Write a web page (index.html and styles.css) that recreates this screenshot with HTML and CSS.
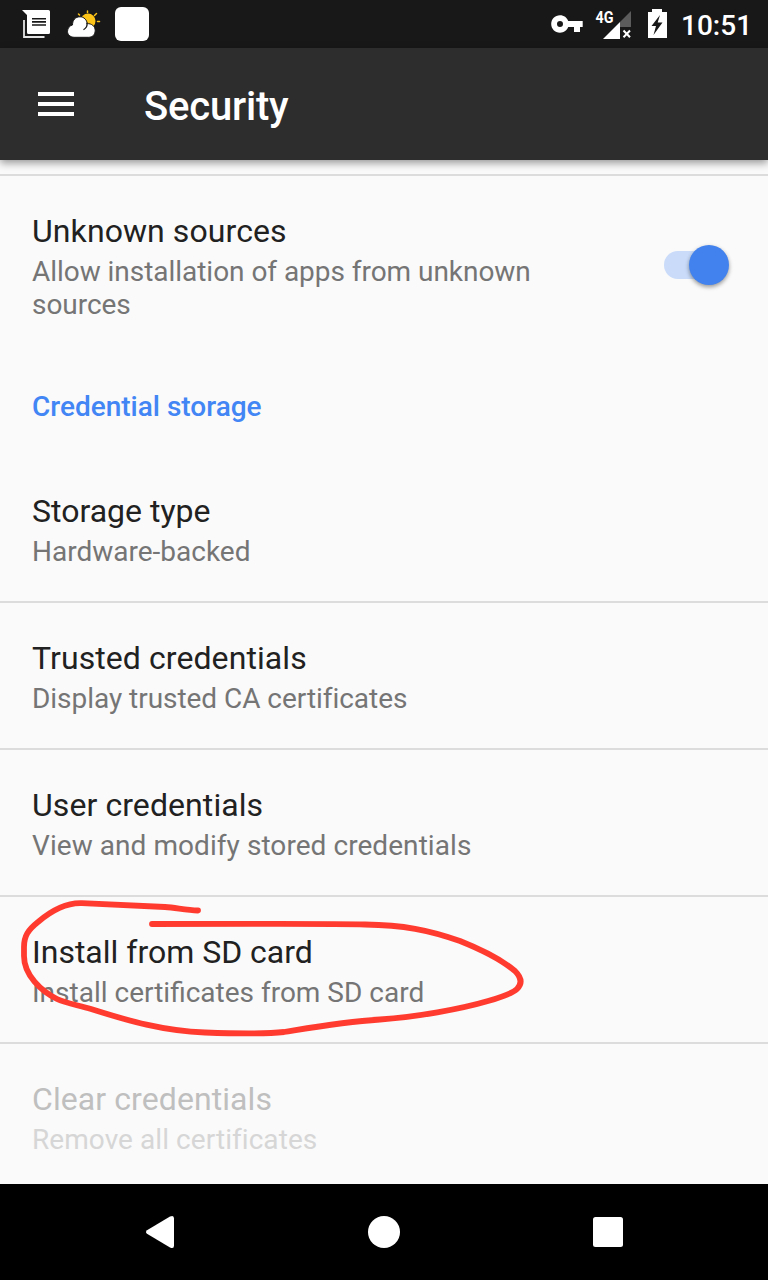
FILE: index.html
```html
<!DOCTYPE html>
<html lang="en">
<head>
<meta charset="utf-8">
<title>Security</title>
<link rel="stylesheet" href="styles.css">
</head>
<body>
<div class="screen">
  <div class="status">
    <svg class="status-left" width="160" height="48" viewBox="0 0 160 48">
      <path fill="#fff" d="M22 10H48.500Q50 10 50 11.500V32.500Q50 34 48.500 34H28.500Q27 34 27 32.500V15Z"/>
      <path fill="none" stroke="#e4e4e4" stroke-width="1.800" d="M24 20V37H44.500"/>
      <path stroke="#181818" stroke-width="1.600" d="M32 18.800H46M32 21.900H46M32 25H46"/>
      <g stroke="#fcc419" stroke-width="1.500" stroke-linecap="round"><path d="M87.500 11V12.500M96.500 13.500L94.500 15.500M97.500 21.500H99.500M78.500 14L79.500 15"/></g>
      <circle cx="88" cy="21" r="7.500" fill="#fcc419"/>
      <path fill="#fff" stroke="#181818" stroke-width="1" d="M74 37.300C70 37 67.500 34.500 67.500 31.300C67.500 28 70 25.500 72.500 25C72.500 20 75.500 16.800 80 16.800C84 16.800 87 20 87.200 23.700C91.500 23.300 95.200 26.200 95.200 30.500C95.200 34.500 92.500 37.300 88.500 37.300Z"/>
      <path fill="none" stroke="#181818" stroke-width="1.300" d="M86.800 22.500Q88 27 83.500 29.700"/>
      <rect x="115" y="7" width="34" height="34" rx="6" fill="#fff"/>
    </svg>
    <div class="status-right">
      <svg width="140" height="48" viewBox="540 0 140 48">
        <path fill="#fff" fill-rule="evenodd" d="M560 15.200C564 15.200 567 17.500 568.200 21H582.700V27H580V32H574V27H568.200C567 30.300 564 32.700 560 32.700C555 32.700 551.200 28.800 551.200 24C551.200 19.100 555 15.200 560 15.200ZM560 21A3 3 0 1 0 560 27A3 3 0 1 0 560 21Z"/>
        <path fill="#5c5c5c" d="M631 11V27H620V22Z"/>
        <path fill="#fff" d="M620 22V39H603Z"/>
        <path stroke="#fff" stroke-width="2" d="M623.500 30.500L630 37.200M630 30.500L623.500 37.200"/>
        <text class="network" x="595.500" y="22.500" textLength="18" lengthAdjust="spacingAndGlyphs">4G</text>
        <path fill="#fff" d="M652 12V9H662V12H667V38H648V12Z"/>
        <path fill="#181818" d="M660 15L651.500 26H656L653.500 35L662.500 22.500H657.700L660 15Z"/>
      </svg>
      <span class="clock">10:51</span>
    </div>
  </div>
  <header class="toolbar">
    <span class="menu"><i></i><i></i><i></i></span>
    <h1>Security</h1>
  </header>
  <main>
    <div class="item source">
      <div class="copy"><h2>Unknown sources</h2><p class="snug">Allow installation of apps from unknown sources</p></div>
      <span class="switch"><span class="knob"></span></span>
    </div>
    <h3>Credential storage</h3>
    <div class="item first"><div class="copy"><h2 class="even">Storage type</h2><p>Hardware-backed</p></div></div>
    <div class="item line"><div class="copy"><h2>Trusted credentials</h2><p class="snug">Display trusted CA certificates</p></div></div>
    <div class="item line"><div class="copy"><h2>User credentials</h2><p class="loose">View and modify stored credentials</p></div></div>
    <div class="item line"><div class="copy"><h2 class="even">Install from SD card</h2><p>Install certificates from SD card</p></div>
      <svg class="scribble" width="520" height="147" viewBox="10 895 520 147">
        <path d="M198 910.500C186 910 177 908 165 907L82 903.200C66 902.500 51 911 38 922C28 930 24 936 24 947V956C24 975 41 991 57 999C65 1003 77 1005 91 1009C129 1021 163 1031 205 1032.500C233 1033.500 262 1034.500 284 1032C315 1027 343 1022 380 1019.500C416 1017 461 1009 488 1001C502 997 513 993 517 989C523 983 521 977 515 971C502 960 480 949 460 941C429 930 403 925 365 924.500C335 923.500 290 924 152 924"/>
      </svg>
    </div>
    <div class="item line disabled"><div class="copy"><h2>Clear credentials</h2><p class="loose">Remove all certificates</p></div></div>
  </main>
  <nav>
    <svg width="768" height="96" viewBox="0 1184 768 96" fill="#fff">
      <path d="M147 1230.200L170 1216.600Q174 1214.500 174 1218.500V1245.500Q174 1249.500 170 1247.400L147 1233.800Q145 1232 147 1230.200Z"/>
      <circle cx="384" cy="1232" r="16"/>
      <rect x="593" y="1217" width="30" height="30" rx="2.500"/>
    </svg>
  </nav>
</div>
</body>
</html>
```
FILE: styles.css
```css
* { box-sizing: border-box; }
body, h1, h2, h3, p { margin: 0; }
body { font-family: Roboto, "Liberation Sans", sans-serif; color: #212121; }
.screen { width: 768px; height: 1280px; display: flex; flex-direction: column; overflow: hidden; background: #fafafa; }
.status { height: 48px; flex: none; display: flex; justify-content: space-between; background: #181818; }
.status-left { display: block; }
.status-right { display: flex; width: 228px; }
.status-right svg { flex: none; }
.network { font: 700 17px Roboto, sans-serif; fill: #fff; }
.clock { color: #fff; font-size: 28px; font-weight: 500; line-height: 51px; white-space: nowrap; padding-left: 1px; }
.toolbar { height: 112px; flex: none; display: flex; align-items: center; gap: 70px; padding-left: 38px; background: #2d2d2d; color: #fff; box-shadow: 0 3px 8px rgba(0,0,0,.4); z-index: 1; }
.menu { width: 36px; display: flex; flex-direction: column; gap: 6px; }
.menu i { height: 4px; background: #fff; }
h1 { font-size: 40px; font-weight: 500; line-height: 48px; padding-top: 6px; letter-spacing: -0.2px; }
main { flex: 1; min-height: 0; overflow: hidden; padding-top: 14px; }
.item { position: relative; display: flex; justify-content: space-between; height: 147px; padding: 35px 40px 0 32px; }
.source { height: 180px; border-top: 2px solid #dcdcdc; }
.first { padding-top: 37px; }
.line { border-top: 2px solid #dcdcdc; }
.copy { width: 560px; }
h2 { font-size: 32px; font-weight: 400; line-height: 40px; letter-spacing: 0.08px; }
.even { letter-spacing: 0; }
p { font-size: 28px; line-height: 33px; padding-top: 4px; color: #757575; }
.snug { letter-spacing: -0.04px; }
.loose { letter-spacing: 0.06px; }
h3 { height: 100px; padding-left: 32px; color: #4285f4; font-size: 28px; font-weight: 500; line-height: 106px; }
.switch { width: 64px; height: 28px; margin: 40px 0 0; display: flex; align-items: center; justify-content: flex-end; border-radius: 14px; background: #c9dbf9; }
.knob { flex: none; width: 40px; height: 40px; margin-right: -1px; border-radius: 50%; background: #4182ee; box-shadow: 0 2px 4px rgba(0,0,0,.4); }
.scribble { position: absolute; left: 10px; top: -2px; }
.scribble path { fill: none; stroke: #ff3b30; stroke-width: 5.800; stroke-linecap: round; stroke-linejoin: round; }
.disabled h2 { color: #bfbfbf; }
.disabled p { color: #d6d6d6; }
nav { height: 96px; flex: none; background: #000; }
nav svg { display: block; }
```
